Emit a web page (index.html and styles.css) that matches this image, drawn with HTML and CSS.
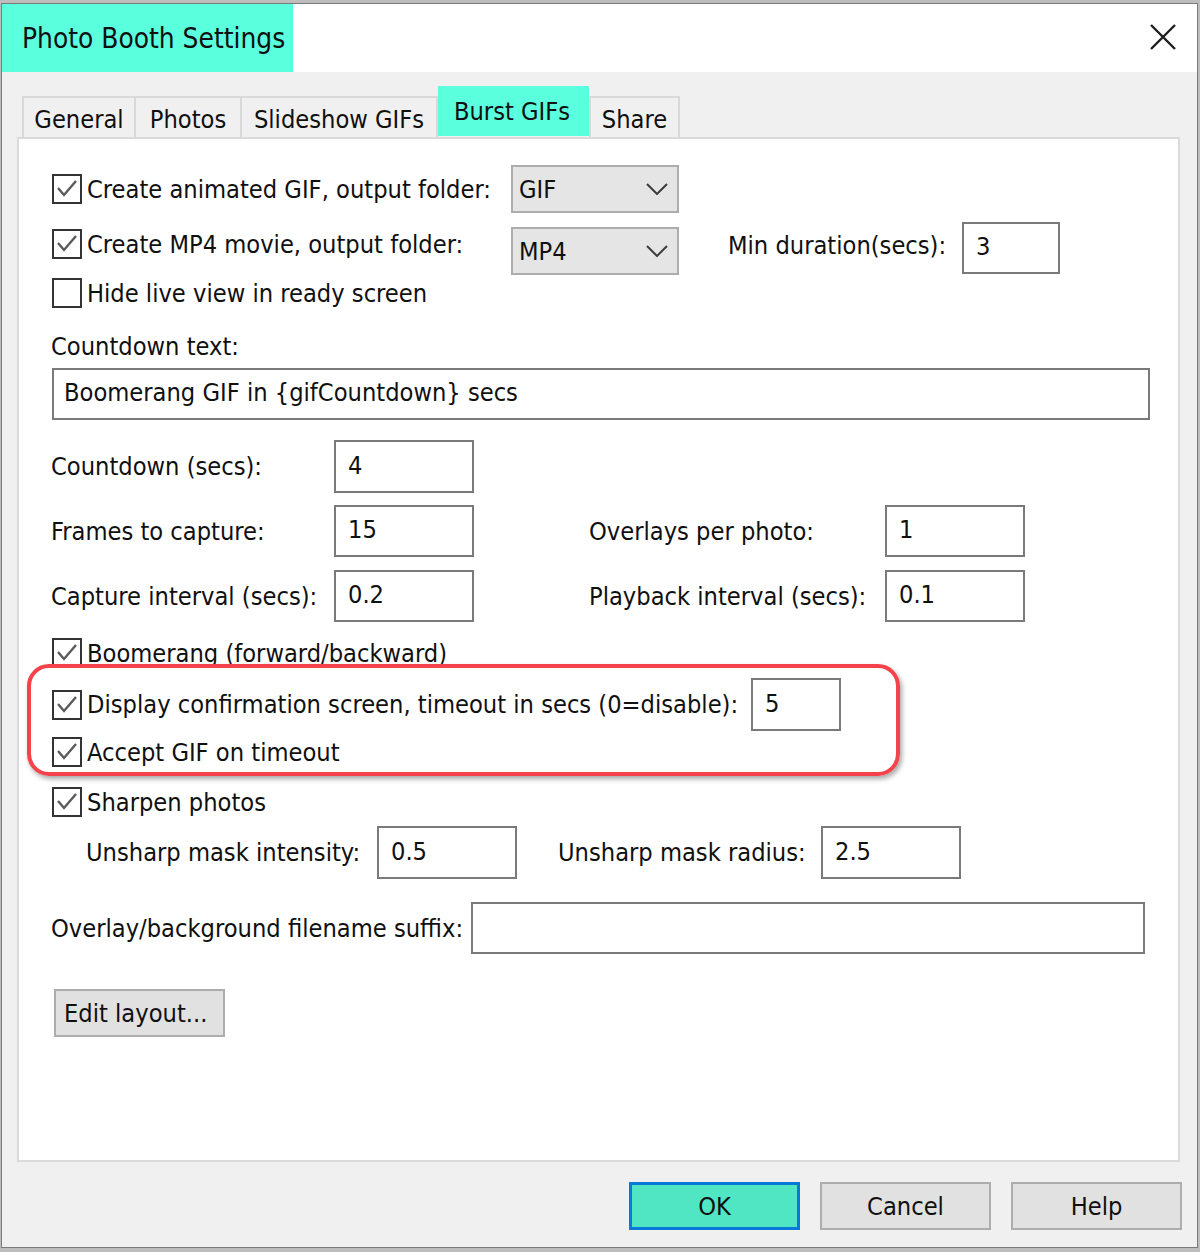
FILE: index.html
```html
<!DOCTYPE html>
<html>
<head>
<meta charset="utf-8">
<title>Photo Booth Settings</title>
<link rel="stylesheet" href="styles.css">
</head>
<body>
<div class="window">
  <div class="titlebar">
    <div class="title">Photo Booth Settings</div>
    <svg class="close" width="26" height="26" viewBox="0 0 26 26"><path d="M1 1 L25 25 M25 1 L1 25" stroke="#1e1e1e" stroke-width="2.4" fill="none"/></svg>
  </div>
  <div class="dlg">
    <div class="tabs">
      <div class="tab t1">General</div>
      <div class="tab t2">Photos</div>
      <div class="tab t3">Slideshow GIFs</div>
      <div class="tab sel">Burst GIFs</div>
      <div class="tab t5">Share</div>
    </div>
    <div class="panel">
      <div class="row r1">
        <div class="check w460"><span class="box"><svg viewBox="0 0 26 26"><path d="M4 12 L10 19 L22 5" stroke="#5a5a5a" stroke-width="2.4" fill="none"/></svg></span><span>Create animated GIF, output folder:</span></div>
        <div class="combo"><span>GIF</span><svg class="chev" width="22" height="12" viewBox="0 0 22 12"><path d="M1 1 L11 11 L21 1" stroke="#3c3c3c" stroke-width="2" fill="none"/></svg></div>
      </div>
      <div class="row r2">
        <div class="check w460 up"><span class="box"><svg viewBox="0 0 26 26"><path d="M4 12 L10 19 L22 5" stroke="#5a5a5a" stroke-width="2.4" fill="none"/></svg></span><span>Create MP4 movie, output folder:</span></div>
        <div class="combo down"><span>MP4</span><svg class="chev" width="22" height="12" viewBox="0 0 22 12"><path d="M1 1 L11 11 L21 1" stroke="#3c3c3c" stroke-width="2" fill="none"/></svg></div>
        <div class="lbl mindur up2">Min duration(secs):</div>
        <div class="input w98">3</div>
      </div>
      <div class="row r3">
        <div class="check"><span class="box"></span><span>Hide live view in ready screen</span></div>
      </div>
      <div class="row r4">
        <div class="lbl">Countdown text:</div>
      </div>
      <div class="row r5">
        <div class="input wide">Boomerang GIF in {gifCountdown} secs</div>
      </div>
      <div class="grid r6">
        <div class="lbl">Countdown (secs):</div>
        <div class="input">4</div>
      </div>
      <div class="grid r7">
        <div class="lbl">Frames to capture:</div>
        <div class="input">15</div>
        <div></div>
        <div class="lbl">Overlays per photo:</div>
        <div class="input">1</div>
      </div>
      <div class="grid r8">
        <div class="lbl">Capture interval (secs):</div>
        <div class="input">0.2</div>
        <div></div>
        <div class="lbl">Playback interval (secs):</div>
        <div class="input">0.1</div>
      </div>
      <div class="row r9">
        <div class="check"><span class="box"><svg viewBox="0 0 26 26"><path d="M4 12 L10 19 L22 5" stroke="#5a5a5a" stroke-width="2.4" fill="none"/></svg></span><span>Boomerang (forward/backward)</span></div>
      </div>
      <div class="group">
        <div class="row r10">
          <div class="check w700"><span class="box"><svg viewBox="0 0 26 26"><path d="M4 12 L10 19 L22 5" stroke="#5a5a5a" stroke-width="2.4" fill="none"/></svg></span><span>Display confirmation screen, timeout in secs (0=disable):</span></div>
          <div class="input w90">5</div>
        </div>
        <div class="row r11">
          <div class="check"><span class="box"><svg viewBox="0 0 26 26"><path d="M4 12 L10 19 L22 5" stroke="#5a5a5a" stroke-width="2.4" fill="none"/></svg></span><span>Accept GIF on timeout</span></div>
        </div>
      </div>
      <div class="row r12">
        <div class="check"><span class="box"><svg viewBox="0 0 26 26"><path d="M4 12 L10 19 L22 5" stroke="#5a5a5a" stroke-width="2.4" fill="none"/></svg></span><span>Sharpen photos</span></div>
      </div>
      <div class="grid2 r13">
        <div class="lbl">Unsharp mask intensity:</div>
        <div class="input">0.5</div>
        <div></div>
        <div class="lbl">Unsharp mask radius:</div>
        <div class="input">2.5</div>
      </div>
      <div class="row r14">
        <div class="lbl w420">Overlay/background filename suffix:</div>
        <div class="input w674"></div>
      </div>
      <div class="row r15">
        <div class="btn edit">Edit layout...</div>
      </div>
    </div>
    <div class="footer">
      <div class="btn ok">OK</div>
      <div class="btn">Cancel</div>
      <div class="btn">Help</div>
    </div>
  </div>
</div>
</body>
</html>
```
FILE: styles.css
```css
*, *::before, *::after { box-sizing: border-box; }
html, body { margin: 0; padding: 0; }
body {
  width: 1200px;
  height: 1252px;
  overflow: hidden;
  background: #bdbdbd;
  font-family: "DejaVu Sans Condensed", "Liberation Sans", sans-serif;
  font-size: 25.2px;
  color: #101010;
}
.window {
  margin: 3px 0 0 1px;
  width: 1197px;
  height: 1245px;
  border: 1px solid #7a7a7a;
  background: #f0f0f0;
  display: flex;
  flex-direction: column;
}
.titlebar {
  height: 68px;
  background: #ffffff;
  display: flex;
  align-items: center;
  justify-content: space-between;
  flex: none;
}
.title {
  height: 68px;
  width: 291px;
  background: #5affdd;
  padding-left: 20px;
  display: flex;
  align-items: center;
  font-size: 27.8px;
  white-space: nowrap;
}
.close { margin-right: 21px; margin-top: -2px; }
.dlg {
  flex: 1;
  padding: 14px 17px 0 15px;
  display: flex;
  flex-direction: column;
}
.tabs {
  height: 51px;
  display: flex;
  align-items: flex-end;
  padding-left: 5px;
  flex: none;
}
.tab {
  height: 41px;
  border: 2px solid #d9d9d9;
  border-bottom: none;
  margin-right: -2px;
  display: flex;
  align-items: center;
  justify-content: center;
  padding-top: 3px;
  white-space: nowrap;
  background: #f0f0f0;
}
.t1 { width: 114px; }
.t2 { width: 108px; }
.t3 { width: 198px; }
.t5 { width: 91px; }
.tab.sel {
  width: 151px;
  height: 50px;
  margin-bottom: 1px;
  margin-left: 2px;
  margin-right: 0;
  border: none;
  background: #5affdd;
  padding-top: 0;
  padding-right: 3px;
}
.panel {
  height: 1025px;
  flex: none;
  background: #ffffff;
  border: 2px solid #dadada;
  padding: 0 0 0 32px;
  display: flex;
  flex-direction: column;
}
.row { display: flex; align-items: center; flex: none; }
.check { display: flex; align-items: center; white-space: nowrap; margin-left: 1px; }
.box {
  width: 30px;
  height: 30px;
  border: 2px solid #333333;
  background: #fff;
  margin-right: 5px;
  display: flex;
  align-items: center;
  justify-content: center;
  flex: none;
}
.box svg { width: 26px; height: 26px; }
.w460 { width: 459px; }
.w700 { width: 699px; }
.lbl { white-space: nowrap; }
.combo {
  width: 168px;
  height: 48px;
  background: #e5e5e5;
  border: 2px solid #adadad;
  display: flex;
  align-items: center;
  justify-content: space-between;
  padding: 0 9px 0 6px;
}
.input {
  width: 140px;
  height: 52px;
  background: #ffffff;
  border: 2px solid #7a7a7a;
  display: flex;
  align-items: center;
  padding: 0 0 3px 12px;
  white-space: nowrap;
}
.w98 { width: 98px; }
.w90 { width: 90px; height: 53px; }
.wide { width: 1098px; margin-left: 1px; padding-left: 10px; }
.w420 { width: 420px; }
.w674 { width: 674px; }
.up { margin-top: -8px; }
.down { margin-top: 6px; }
.up2 { margin-top: -5px; }
.mindur { margin-left: 49px; width: 234px; }

.r1 { margin-top: 26px; height: 48px; }
.r2 { margin-top: 9px; height: 52px; }
.r3 { margin-top: 2px; height: 34px; }
.r4 { margin-top: 20px; height: 32px; }
.r5 { margin-top: 6px; height: 52px; }
.grid {
  display: grid;
  grid-template-columns: 283px 140px 115px 296px 140px;
  align-items: center;
  flex: none;
}
.grid2 {
  display: grid;
  grid-template-columns: 326px 133px 48px 263px 133px;
  align-items: center;
  flex: none;
}
.grid2 .lbl:first-child { padding-left: 35px; }
.grid2 .input { height: 53px; }
.r6 { margin-top: 20px; height: 53px; }
.r6 .input { height: 53px; }
.r7 { margin-top: 12px; height: 52px; }
.r8 { margin-top: 13px; height: 52px; }
.r9 { margin-top: 14px; height: 34px; }
.group { position: relative; margin-top: 8px; flex: none; }
.group::after {
  content: "";
  position: absolute;
  top: -14px;
  left: -24px;
  width: 873px;
  height: 112px;
  border: 4px solid #f5434b;
  border-radius: 22px;
  box-shadow: 2px 3px 5px rgba(0, 0, 0, 0.35);
}
.r10 { height: 53px; }
.r11 { margin-top: 4px; height: 34px; }
.r12 { margin-top: 16px; height: 34px; }
.r13 { margin-top: 7px; height: 53px; }
.r14 { margin-top: 23px; height: 52px; }
.r15 { margin-top: 35px; height: 48px; }
.btn {
  width: 171px;
  height: 48px;
  background: #e1e1e1;
  border: 2px solid #adadad;
  display: flex;
  align-items: center;
  justify-content: center;
  white-space: nowrap;
}
.btn.edit { margin-left: 3px; justify-content: flex-start; padding-left: 8px; }
.footer {
  display: flex;
  justify-content: flex-end;
  gap: 20px;
  padding-top: 20px;
  padding-right: 0;
  margin-right: -2px;
}
.btn.ok {
  background: #50e6c4;
  border: 3px solid #0a78d6;
}
```
